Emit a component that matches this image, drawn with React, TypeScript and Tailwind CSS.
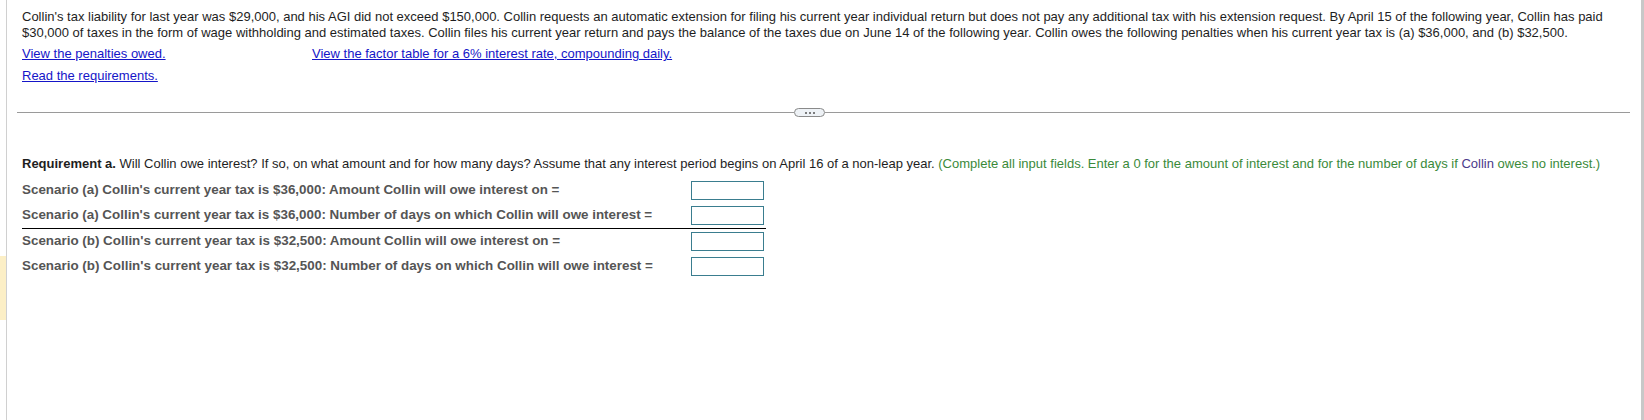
import React from "react";

const rows = [
  "Scenario (a) Collin's current year tax is $36,000: Amount Collin will owe interest on =",
  "Scenario (a) Collin's current year tax is $36,000: Number of days on which Collin will owe interest =",
  "Scenario (b) Collin's current year tax is $32,500: Amount Collin will owe interest on =",
  "Scenario (b) Collin's current year tax is $32,500: Number of days on which Collin will owe interest =",
];

export default function App() {
  return (
    <div
      className="flex h-[420px] w-[1644px] bg-white text-[#1e1e1e]"
      style={{ fontFamily: '"Liberation Sans", Arial, sans-serif' }}
    >
      <div className="w-[6px] shrink-0">
        <div className="mt-[256px] h-[64px] w-[6px] bg-[#fcefc6]" />
      </div>
      <div className="flex h-full w-[1638px] flex-col border-l border-r-[3px] border-l-[#d0d0d0] border-r-[#c8c8c8] pl-[15px] pr-[11px] pt-[9px]">
        <p className="text-[13px] leading-[16px]">
          Collin's tax liability for last year was $29,000, and his AGI did not exceed $150,000. Collin requests an
          automatic extension for filing his current year individual return but does not pay any additional tax with
          his extension request. By April 15 of the following year, Collin has paid $30,000 of taxes in the form of
          wage withholding and estimated taxes. Collin files his current year return and pays the balance of the taxes
          due on June 14 of the following year. Collin owes the following penalties when his current year tax is (a)
          $36,000, and (b) $32,500.
        </p>
        <div className="mt-[5px] flex text-[13px] leading-[16px]">
          <a href="#" className="w-[290px] text-[#1515c8] underline">
            <span>View the penalties owed.</span>
          </a>
          <a href="#" className="text-[#1515c8] underline">
            View the factor table for a 6% interest rate, compounding daily.
          </a>
        </div>
        <div className="mt-[6px] text-[13px] leading-[16px]">
          <a href="#" className="text-[#1515c8] underline">
            Read the requirements.
          </a>
        </div>
        <div className="-ml-[5px] mt-[24px] flex h-[9px] items-center">
          <div className="h-px w-[777px] bg-[#9a9a9a]" />
          <div className="flex h-[9px] w-[31px] items-center justify-center gap-[2px] rounded-full border border-[#8a8a8a] bg-[#eef2f6]">
            <span className="h-[2px] w-[2px] rounded-full bg-[#555]" />
            <span className="h-[2px] w-[2px] rounded-full bg-[#555]" />
            <span className="h-[2px] w-[2px] rounded-full bg-[#555]" />
          </div>
          <div className="h-px flex-1 bg-[#9a9a9a]" />
        </div>
        <p className="mt-[39px] whitespace-nowrap text-[13px] leading-[16px]">
          <span className="font-bold">Requirement a.</span> Will Collin owe interest? If so, on what amount and for
          how many days? Assume that any interest period begins on April 16 of a non-leap year.{" "}
          <span className="text-[#3a8a3a]">
            (Complete all input fields. Enter a 0 for the amount of interest and for the number of days if{" "}
            <span className="text-[#4a3a8a]">Collin</span> owes no interest.)
          </span>
        </p>
        <div className="mt-[6px] w-[744px]">
          {rows.map((r, i) => (
            <div
              key={i}
              className={
                i === 1
                  ? "flex h-[26px] items-center justify-between border-b border-black pb-[3px] pt-[3px]"
                  : "flex h-[25px] items-center justify-between py-[3px]"
              }
            >
              <span className="whitespace-nowrap text-[13.4px] font-bold text-[#555]">{r}</span>
              <input
                type="text"
                className="mr-[2px] h-[19px] w-[73px] border border-[#3a7d8f] bg-white outline-none"
              />
            </div>
          ))}
        </div>
      </div>
    </div>
  );
}
